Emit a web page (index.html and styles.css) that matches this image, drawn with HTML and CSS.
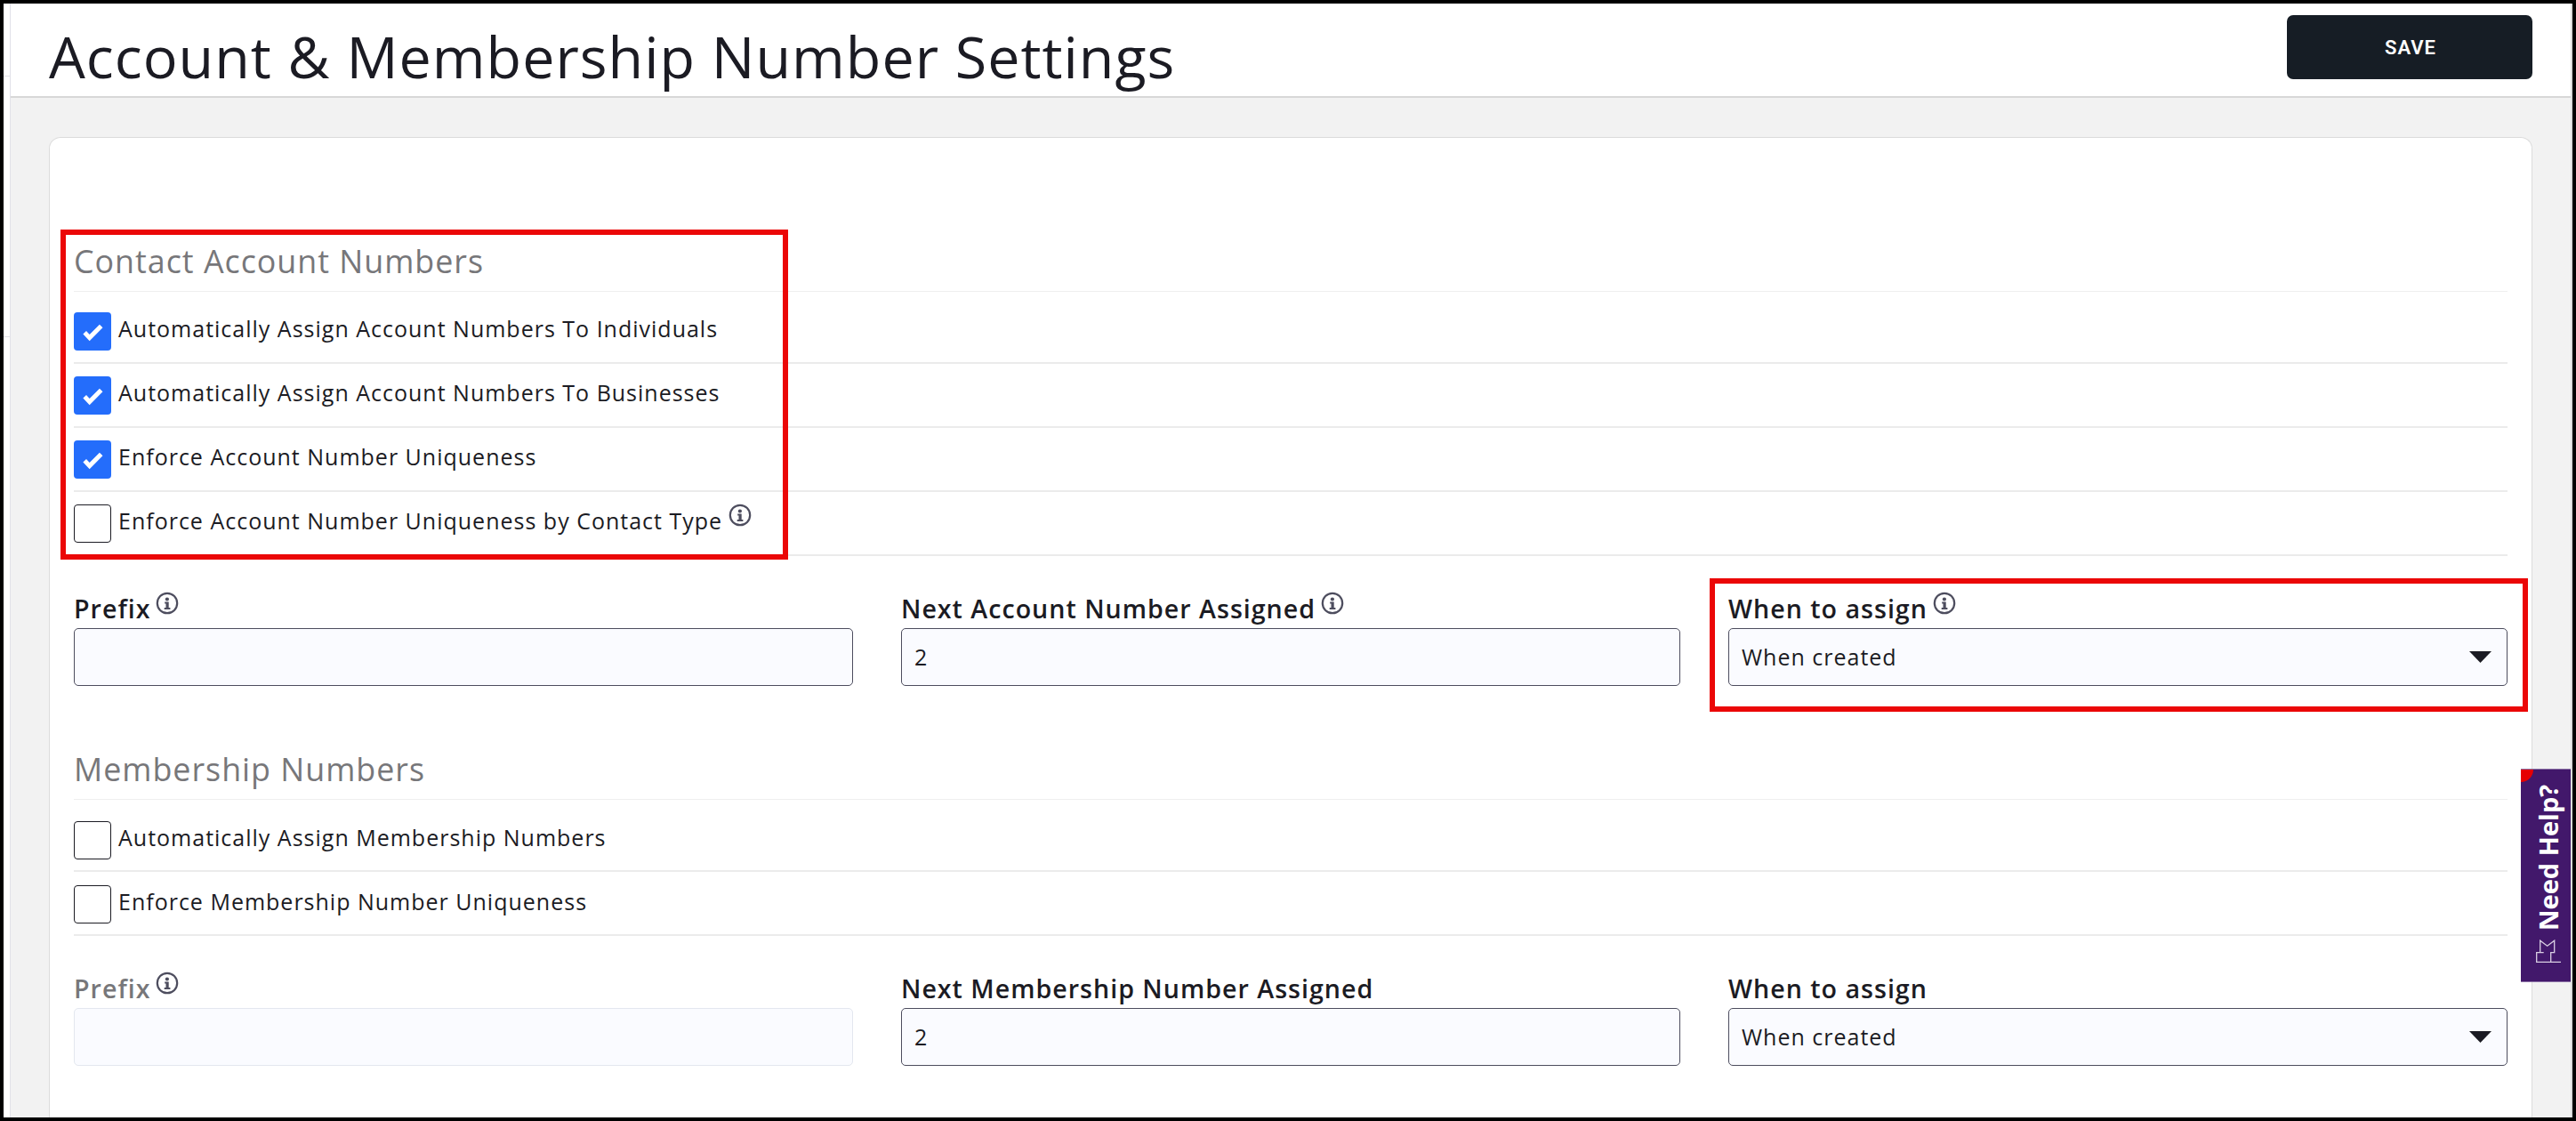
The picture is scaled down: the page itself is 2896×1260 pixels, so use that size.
FILE: index.html
```html
<!DOCTYPE html>
<html lang="en">
<head>
  <meta charset="UTF-8" />
  <meta name="viewport" content="width=device-width, initial-scale=1.0" />
  <title>Account &amp; Membership Number Settings</title>
  <link rel="stylesheet" href="styles.css">
</head>
<body>
  <svg class="sprite" width="0" height="0">
    <symbol id="info" viewBox="0 0 26 26">
      <circle cx="13" cy="13" r="11.2" fill="none" stroke="currentColor" stroke-width="2.2" />
      <circle cx="12.9" cy="8.5" r="2.1" fill="currentColor" />
      <path d="M10.2 11.6h4.5v6.5h1.7v1.9H9.7v-1.9h1.8v-4.6h-1.3z" fill="currentColor" />
    </symbol>
    <symbol id="check" viewBox="0 0 42 43">
      <path d="M12.2 22.8l5.5 5.8L30.7 15.6" fill="none" stroke="#fff" stroke-width="5" />
    </symbol>
  </svg>

  <div class="page">
    <aside class="rail">
      <div class="rail-item first"></div>
      <div class="rail-item"></div>
    </aside>

    <main class="main">
      <header class="header">
        <h1>Account &amp; Membership Number Settings</h1>
        <button type="button" class="save">SAVE</button>
      </header>

      <div class="card">
        <h2>Contact Account Numbers</h2>
        <div class="options">
          <label class="option"><span class="box checked"><svg><use href="#check" /></svg></span><span>Automatically Assign Account Numbers To Individuals</span></label>
          <label class="option"><span class="box checked"><svg><use href="#check" /></svg></span><span>Automatically Assign Account Numbers To Businesses</span></label>
          <label class="option"><span class="box checked"><svg><use href="#check" /></svg></span><span>Enforce Account Number Uniqueness</span></label>
          <label class="option"><span class="box"></span><span>Enforce Account Number Uniqueness by Contact Type</span><svg class="info"><use href="#info" /></svg></label>
        </div>

        <div class="fields">
          <div class="field">
            <div class="field-label"><label for="accPrefix">Prefix</label><svg class="info"><use href="#info" /></svg></div>
            <input id="accPrefix" type="text" />
          </div>
          <div class="field">
            <div class="field-label"><label for="accNext">Next Account Number Assigned</label><svg class="info"><use href="#info" /></svg></div>
            <input id="accNext" type="text" value="2" />
          </div>
          <div class="field">
            <div class="field-label"><label for="accWhen">When to assign</label><svg class="info"><use href="#info" /></svg></div>
            <div class="select">
              <select id="accWhen"><option>When created</option></select>
              <span class="arrow"></span>
            </div>
          </div>
        </div>

        <h2 class="second">Membership Numbers</h2>
        <div class="options membership">
          <label class="option"><span class="box"></span><span>Automatically Assign Membership Numbers</span></label>
          <label class="option"><span class="box"></span><span>Enforce Membership Number Uniqueness</span></label>
        </div>

        <div class="fields">
          <div class="field disabled">
            <div class="field-label"><label for="memPrefix">Prefix</label><svg class="info"><use href="#info" /></svg></div>
            <input id="memPrefix" type="text" disabled />
          </div>
          <div class="field">
            <div class="field-label"><label for="memNext">Next Membership Number Assigned</label></div>
            <input id="memNext" type="text" value="2" />
          </div>
          <div class="field">
            <div class="field-label"><label for="memWhen">When to assign</label></div>
            <div class="select">
              <select id="memWhen"><option>When created</option></select>
              <span class="arrow"></span>
            </div>
          </div>
        </div>

        <div class="highlight highlight-options"></div>
        <div class="highlight highlight-assign"></div>
      </div>
    </main>

    <div class="help">
      <span class="help-text">Need Help?</span>
      <svg class="help-icon" viewBox="0 0 30 27">
        <path d="M29 25.3H1.7V14.7H9.7M5.7 14.7V1.2L13.7 7.3L21.7 1.2V14.7H17.7V25.3" fill="none" stroke="#d9cfe3" stroke-width="1.3" />
      </svg>
    </div>
  </div>
</body>
</html>
```

FILE: styles.css
```css
* {
  box-sizing: border-box;
}

body {
  margin: 0;
  font-family: "Open Sans", sans-serif;
  font-size: 25px;
  letter-spacing: 1px;
  color: #1b1b23;
}

.sprite {
  position: absolute;
}

.page {
  position: relative;
  display: flex;
  width: 2896px;
  height: 1260px;
  border: 4px solid #000;
  overflow: hidden;
  background: #fff;
}

/* edge of the side menu */
.rail {
  width: 8px;
  border-right: 1px solid #e1e1e8;
}

.rail-item {
  height: 293px;
  border-bottom: 1px solid #e1e1e8;
}

.rail-item.first {
  height: 82px;
}

.main {
  flex: 1;
  display: flex;
  flex-direction: column;
  background: #f2f2f2;
  border-right: 2px solid #dadada;
}

.header {
  display: flex;
  justify-content: space-between;
  align-items: flex-start;
  height: 106px;
  padding: 0 43px;
  background: #fff;
  border-bottom: 2px solid #d7d7d7;
}

h1 {
  margin: 15px 0 0;
  font-size: 64.6px;
  line-height: 88px;
  font-weight: 400;
}

.save {
  width: 276px;
  height: 72px;
  margin-top: 13px;
  padding: 1px 0 0 2px;
  border: none;
  border-radius: 7px;
  background: #161d25;
  color: #fff;
  font-family: Roboto, sans-serif;
  font-size: 22px;
  font-weight: 600;
  letter-spacing: 1px;
}

.card {
  position: relative;
  flex: 1;
  margin: 44px 43px 0;
  padding: 114px 27px 0;
  background: #fff;
  border: 1px solid #dcdcdc;
  border-bottom: none;
  border-radius: 13px 13px 0 0;
}

h2 {
  margin: 0 0 9px;
  padding-bottom: 10px;
  border-bottom: 1px solid #efefef;
  font-size: 35.8px;
  line-height: 48px;
  font-weight: 400;
  color: #77777a;
}

h2.second {
  margin-top: 69px;
}

.option {
  display: flex;
  align-items: flex-start;
  height: 72px;
  border-bottom: 2px solid #ebebeb;
  line-height: 65px;
}

.membership .option {
  padding-top: 1px;
}

.box {
  width: 42px;
  height: 43px;
  margin: 14px 8px 0 0;
  border: 1px solid #1b1b23;
  border-radius: 4px;
}

.box.checked {
  border: none;
  background: #246dfb;
}

.box svg {
  display: block;
  width: 42px;
  height: 43px;
}

.info {
  width: 26px;
  height: 26px;
  margin-left: 6px;
  color: #4d4d5e;
}

.option .info {
  margin-top: 13px;
  margin-left: 7px;
}

.fields {
  display: grid;
  grid-template-columns: repeat(3, 1fr);
  column-gap: 54px;
  margin-top: 40px;
}

.field-label {
  display: flex;
  align-items: flex-start;
  height: 38px;
  margin-bottom: 3px;
  font-size: 28.6px;
  line-height: 38px;
  font-weight: 600;
}

.disabled .field-label label {
  color: #77777a;
}

input, select {
  display: block;
  width: 100%;
  height: 65px;
  padding: 0 14px 2px;
  border: 1px solid #4d4d5e;
  border-radius: 5px;
  background: #fafbff;
  font: inherit;
  letter-spacing: inherit;
  color: inherit;
}

input:disabled {
  border-color: #e3e7ef;
}

.select {
  position: relative;
}

select {
  appearance: none;
}

.arrow {
  position: absolute;
  top: 26px;
  right: 18px;
  width: 25px;
  height: 13px;
  background: #1b1b23;
  clip-path: polygon(0 0, 100% 0, 50% 100%);
}

.highlight {
  position: absolute;
  border: 6px solid #eb0707;
}

.highlight-options {
  left: 12px;
  top: 103px;
  width: 818px;
  height: 371px;
}

.highlight-assign {
  left: 1866px;
  top: 495px;
  width: 920px;
  height: 150px;
}

.help {
  position: absolute;
  right: 2px;
  top: 860px;
  display: flex;
  flex-direction: column;
  width: 56px;
  height: 240px;
  padding: 18px 0 0 14px;
  overflow: hidden;
  background: #42186b;
  border-top: 1px solid #8c72a6;
  border-bottom: 1px solid #8c72a6;
}

.help::before {
  content: "";
  position: absolute;
  left: -14px;
  top: -14px;
  width: 28px;
  height: 28px;
  border-radius: 50%;
  background: #e60000;
}

.help-text {
  writing-mode: vertical-rl;
  transform: rotate(180deg);
  height: 163px;
  width: 34px;
  line-height: 34px;
  font-size: 29px;
  font-weight: 700;
  letter-spacing: 0;
  color: #fff;
  white-space: nowrap;
}

.help-icon {
  width: 30px;
  height: 27px;
  margin: 10px 0 0 2px;
}
```
